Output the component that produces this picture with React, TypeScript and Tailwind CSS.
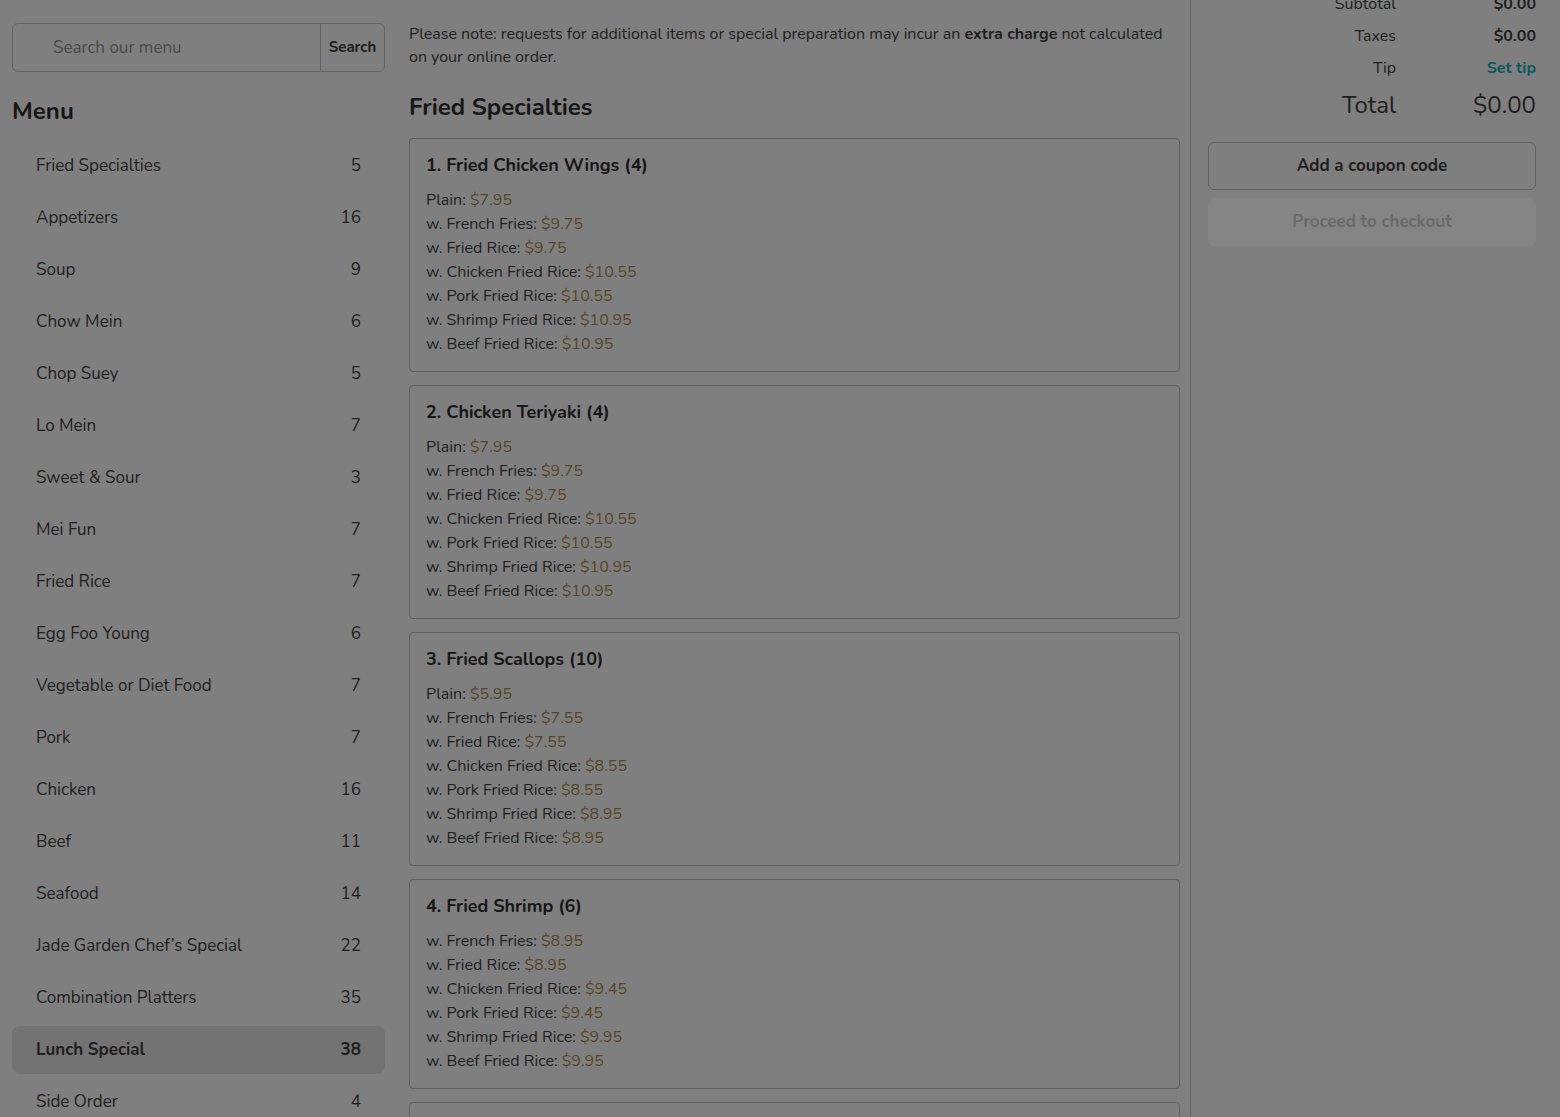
import React from "react";

const categories: [string, number][] = [
  ["Fried Specialties", 5],
  ["Appetizers", 16],
  ["Soup", 9],
  ["Chow Mein", 6],
  ["Chop Suey", 5],
  ["Lo Mein", 7],
  ["Sweet & Sour", 3],
  ["Mei Fun", 7],
  ["Fried Rice", 7],
  ["Egg Foo Young", 6],
  ["Vegetable or Diet Food", 7],
  ["Pork", 7],
  ["Chicken", 16],
  ["Beef", 11],
  ["Seafood", 14],
  ["Jade Garden Chef\u2019s Special", 22],
  ["Combination Platters", 35],
  ["Lunch Special", 38],
  ["Side Order", 4],
];

const items: { title: string; lines: [string, string][] }[] = [
  {
    title: "1. Fried Chicken Wings (4)",
    lines: [
      ["Plain:", "$7.95"],
      ["w. French Fries:", "$9.75"],
      ["w. Fried Rice:", "$9.75"],
      ["w. Chicken Fried Rice:", "$10.55"],
      ["w. Pork Fried Rice:", "$10.55"],
      ["w. Shrimp Fried Rice:", "$10.95"],
      ["w. Beef Fried Rice:", "$10.95"],
    ],
  },
  {
    title: "2. Chicken Teriyaki (4)",
    lines: [
      ["Plain:", "$7.95"],
      ["w. French Fries:", "$9.75"],
      ["w. Fried Rice:", "$9.75"],
      ["w. Chicken Fried Rice:", "$10.55"],
      ["w. Pork Fried Rice:", "$10.55"],
      ["w. Shrimp Fried Rice:", "$10.95"],
      ["w. Beef Fried Rice:", "$10.95"],
    ],
  },
  {
    title: "3. Fried Scallops (10)",
    lines: [
      ["Plain:", "$5.95"],
      ["w. French Fries:", "$7.55"],
      ["w. Fried Rice:", "$7.55"],
      ["w. Chicken Fried Rice:", "$8.55"],
      ["w. Pork Fried Rice:", "$8.55"],
      ["w. Shrimp Fried Rice:", "$8.95"],
      ["w. Beef Fried Rice:", "$8.95"],
    ],
  },
  {
    title: "4. Fried Shrimp (6)",
    lines: [
      ["w. French Fries:", "$8.95"],
      ["w. Fried Rice:", "$8.95"],
      ["w. Chicken Fried Rice:", "$9.45"],
      ["w. Pork Fried Rice:", "$9.45"],
      ["w. Shrimp Fried Rice:", "$9.95"],
      ["w. Beef Fried Rice:", "$9.95"],
    ],
  },
  {
    title: "5. Fried Jumbo Shrimp (5)",
    lines: [
      ["w. French Fries:", "$9.95"],
      ["w. Fried Rice:", "$9.95"],
    ],
  },
];

const summary: [string, string, string][] = [
  ["Subtotal", "$0.00", "font-bold"],
  ["Taxes", "$0.00", "font-bold"],
  ["Tip", "Set tip", "font-bold text-[#0d575d]"],
];

export default function App() {
  return (
    <div
      className="w-[1560px] h-[1117px] overflow-hidden bg-[#7f7f7f] text-[#1e1e1e] flex"
      style={{ fontFamily: '"Nunito", "Lato", sans-serif' }}
    >
      {/* Left column */}
      <div className="w-[373px] ml-[12px] pt-[23px] shrink-0">
        <div className="flex h-[49px] border border-[#626262] rounded-[6px] overflow-hidden">
          <div className="flex-1 flex items-center pl-[40px] text-[17px] text-[#4a4a4a]">
            Search our menu
          </div>
          <div className="w-[64px] border-l border-[#626262] flex items-center justify-center text-[15px] font-bold text-[#1c1c1c]">
            Search
          </div>
        </div>
        <h2 className="mt-[24px] text-[24px] font-bold leading-[30px] text-[#161616]">Menu</h2>
        <div className="mt-[16px] flex flex-col gap-[4px]">
          {categories.map(([name, count]) => {
            const active = name === "Lunch Special";
            return (
              <div
                key={name}
                className={
                  "h-[48px] flex items-center justify-between px-[24px] rounded-[8px] text-[17px] " +
                  (active ? "bg-[#737373] font-bold" : "")
                }
              >
                <span>{name}</span>
                <span>{count}</span>
              </div>
            );
          })}
        </div>
      </div>

      {/* Main column */}
      <div className="w-[771px] ml-[24px] shrink-0 pt-[23px]">
        <p className="text-[16px] leading-[23px] pr-[8px]">
          Please note: requests for additional items or special preparation may incur an{" "}
          <b>extra charge</b> not calculated on your online order.
        </p>
        <h2 className="mt-[23px] text-[24px] font-bold leading-[30px] text-[#161616]">
          Fried Specialties
        </h2>
        <div className="mt-[16px] flex flex-col gap-[13px]">
          {items.map((it) => (
            <div
              key={it.title}
              className="border border-[#5f5f5f] rounded-[4px] px-[16px] pt-[14px] pb-[15px]"
            >
              <div className="text-[18px] font-bold leading-[24px] text-[#161616]">{it.title}</div>
              <div className="mt-[11px] flex flex-col">
                {it.lines.map(([l, p], i) => (
                  <div key={i} className="text-[16px] leading-[24px]">
                    {l} <span className="text-[#55462a]">{p}</span>
                  </div>
                ))}
              </div>
            </div>
          ))}
        </div>
      </div>

      {/* Right column */}
      <div className="ml-[10px] flex-1 border-l border-[#5f5f5f] pl-[17px] pr-[24px]">
        <div className="-mt-[12px] flex flex-col">
          {summary.map(([l, v, c]) => (
            <div key={l} className="flex h-[32px] items-center text-[16px]">
              <div className="flex-1 text-right">{l}</div>
              <div className={"w-[140px] text-right " + c}>{v}</div>
            </div>
          ))}
          <div className="flex h-[42px] items-center text-[24px]">
            <div className="flex-1 text-right">Total</div>
            <div className="w-[140px] text-right">$0.00</div>
          </div>
        </div>
        <div className="mt-[16px] h-[48px] border border-[#626262] rounded-[6px] flex items-center justify-center text-[17px] font-bold">
          Add a coupon code
        </div>
        <div className="mt-[8px] h-[48px] rounded-[6px] bg-[#858585] flex items-center justify-center text-[17px] font-bold text-[#6a6a6a]">
          Proceed to checkout
        </div>
      </div>
    </div>
  );
}
